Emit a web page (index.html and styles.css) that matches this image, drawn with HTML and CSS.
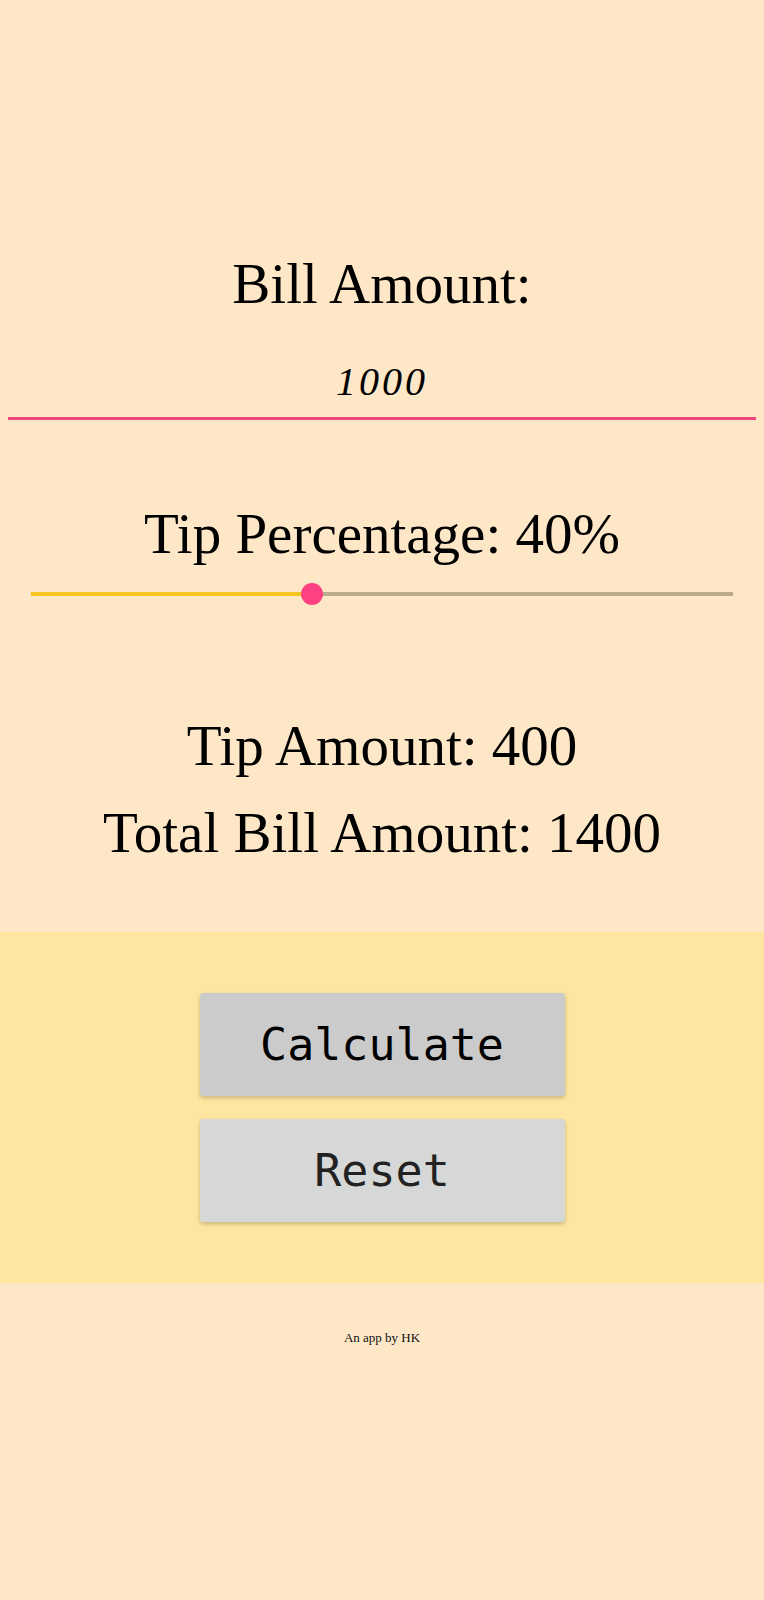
FILE: index.html
```html
<!DOCTYPE html>
<html lang="en">
<head>
<meta charset="utf-8">
<title>Tip Calculator</title>
<link rel="stylesheet" href="styles.css">
</head>
<body>
<main class="app">
  <section class="inputs">
    <label class="heading bill-label" for="bill">Bill Amount:</label>
    <input id="bill" class="bill-input" type="text" value="1000">
    <div class="heading tip-label">Tip Percentage: 40%</div>
    <div class="slider">
      <div class="track">
        <div class="track-fill" style="width: 40%"></div>
        <div class="thumb" style="left: 40%"></div>
      </div>
    </div>
  </section>
  <section class="results">
    <div class="heading result">Tip Amount: 400</div>
    <div class="heading result total">Total Bill Amount: 1400</div>
  </section>
  <section class="actions">
    <button class="btn btn-calc" type="button">Calculate</button>
    <button class="btn btn-reset" type="button">Reset</button>
  </section>
  <footer class="footer">An app by HK</footer>
</main>
</body>
</html>
```
FILE: styles.css
```css
html, body {
  margin: 0;
  padding: 0;
  background: #fee7c7;
}

.app {
  display: flex;
  flex-direction: column;
  min-height: 1600px;
}

.heading {
  font-family: "Liberation Serif", "Times New Roman", serif;
  font-size: 57px;
  line-height: 64px;
  color: #000;
  text-align: center;
}

.inputs {
  display: flex;
  flex-direction: column;
  padding: 252px 8px 0;
}

.bill-label {
  display: block;
}

.bill-input {
  box-sizing: content-box;
  display: block;
  width: 100%;
  height: 71px;
  margin: 30px 0 0;
  padding: 0;
  border: none;
  border-bottom: 3px solid #f0457e;
  background: transparent;
  outline: none;
  text-align: center;
  font-family: "Liberation Serif", "Times New Roman", serif;
  font-style: italic;
  font-size: 40px;
  letter-spacing: 3px;
  color: #000;
}

.tip-label {
  margin-top: 82px;
}

.slider {
  height: 56px;
  padding: 0 23px;
  display: flex;
  align-items: center;
}

.track {
  position: relative;
  flex: 1;
  height: 4px;
  background: #bcaa8c;
}

.track-fill {
  height: 100%;
  background: #f5c521;
}

.thumb {
  position: absolute;
  top: 50%;
  width: 22px;
  height: 22px;
  margin: -11px 0 0 -11px;
  border-radius: 50%;
  background: #fd4182;
}

.results {
  display: flex;
  flex-direction: column;
  gap: 23px;
  padding-top: 92px;
}

.actions {
  margin-top: 67px;
  background: #ffe6a0;
  padding: 61px 0 61px;
  display: flex;
  flex-direction: column;
  align-items: center;
  gap: 23px;
}

.btn {
  width: 365px;
  height: 103px;
  border: none;
  border-radius: 3px;
  box-shadow: 0 2px 4px rgba(0, 0, 0, 0.22);
  font-family: "DejaVu Sans Mono", monospace;
  font-size: 45px;
  padding: 0;
  cursor: pointer;
}

.btn-calc {
  background: #cbcbcb;
  color: #000;
}

.btn-reset {
  background: #d6d7d7;
  color: #222;
}

.footer {
  margin-top: 47px;
  text-align: center;
  font-family: "Liberation Serif", "Times New Roman", serif;
  font-size: 13px;
  line-height: 15px;
  color: #111;
}
```
